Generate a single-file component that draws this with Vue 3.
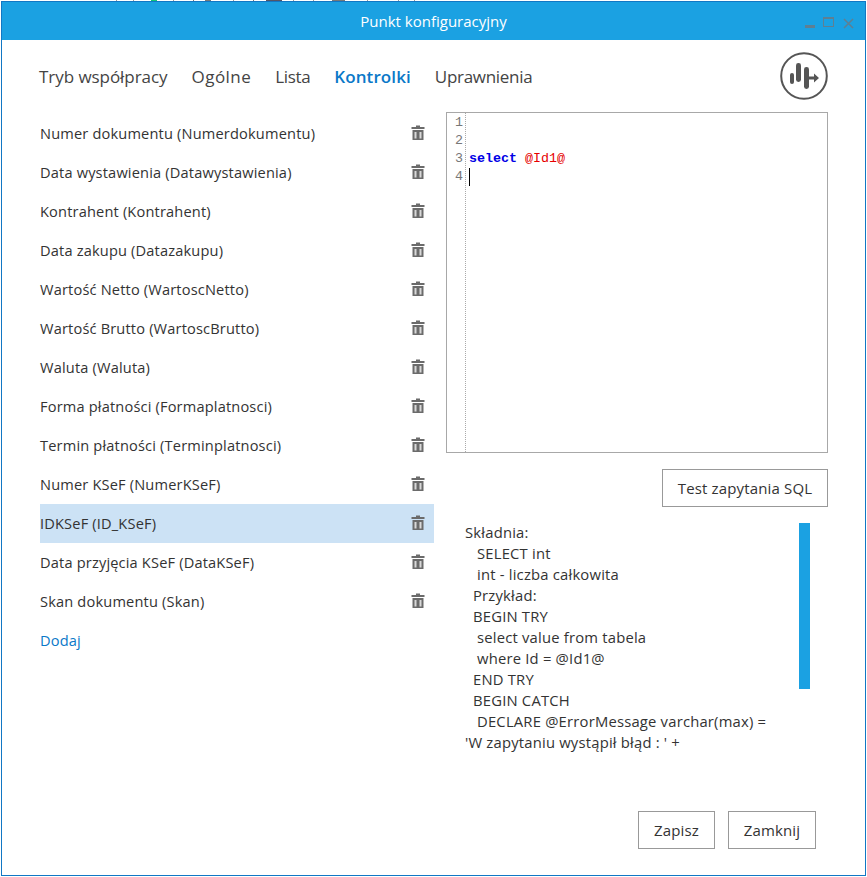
<script setup>
const tabs = [
  { label: 'Tryb współpracy', cls: 'tab-tryb' },
  { label: 'Ogólne', cls: 'tab-ogolne' },
  { label: 'Lista', cls: 'tab-lista' },
  { label: 'Kontrolki', cls: 'active' },
  { label: 'Uprawnienia', cls: 'tab-upr' },
]
const rows = [
  'Numer dokumentu (Numerdokumentu)',
  'Data wystawienia (Datawystawienia)',
  'Kontrahent (Kontrahent)',
  'Data zakupu (Datazakupu)',
  'Wartość Netto (WartoscNetto)',
  'Wartość Brutto (WartoscBrutto)',
  'Waluta (Waluta)',
  'Forma płatności (Formaplatnosci)',
  'Termin płatności (Terminplatnosci)',
  'Numer KSeF (NumerKSeF)',
  'IDKSeF (ID_KSeF)',
  'Data przyjęcia KSeF (DataKSeF)',
  'Skan dokumentu (Skan)',
]
const helpLines = [
  { t: 'Składnia:', i: 0 },
  { t: 'SELECT int', i: 12 },
  { t: 'int - liczba całkowita', i: 12 },
  { t: 'Przykład:', i: 8 },
  { t: 'BEGIN TRY', i: 8 },
  { t: 'select value from tabela', i: 12 },
  { t: 'where Id = @Id1@', i: 12 },
  { t: 'END TRY', i: 8 },
  { t: 'BEGIN CATCH', i: 8 },
  { t: 'DECLARE @ErrorMessage varchar(max) =', i: 12 },
  { t: "'W zapytaniu wystąpił błąd : ' +", i: 0 },
]
const marks = [
  { x: 116, w: 1, c: '#999' }, { x: 133, w: 1, c: '#999' }, { x: 151, w: 6, c: '#10c878' },
  { x: 173, w: 1, c: '#999' }, { x: 193, w: 1, c: '#777' }, { x: 205, w: 6, c: '#777' },
  { x: 233, w: 1, c: '#999' }, { x: 253, w: 1, c: '#777' }, { x: 266, w: 16, c: '#556' },
  { x: 293, w: 1, c: '#999' }, { x: 313, w: 1, c: '#999' }, { x: 332, w: 13, c: '#777' },
  { x: 367, w: 1, c: '#999' }, { x: 398, w: 1, c: '#999' }, { x: 414, w: 1, c: '#999' },
]
const strip = marks.map((m, i) => ({
  ...m,
  gap: m.x - (i ? marks[i - 1].x + marks[i - 1].w : 0),
}))
</script>

<template>
  <div class="page">
    <div class="strip">
      <span
        v-for="m in strip"
        :key="m.x"
        class="mark"
        :style="{ marginLeft: m.gap + 'px', width: m.w + 'px', background: m.c }"
      ></span>
    </div>
    <div class="window">
      <header class="titlebar">
        <span class="title">Punkt konfiguracyjny</span>
        <div class="controls">
          <svg width="52" height="16" viewBox="0 0 52 16">
            <rect x="2" y="10" width="10" height="3" fill="#5f7f92" />
            <rect x="20.500" y="2.500" width="10" height="9" fill="none" stroke="#5f7f92" />
            <rect x="20" y="2" width="11" height="2" fill="#5f7f92" />
            <path d="M41 4l9 9M50 4l-9 9" stroke="#5f7f92" stroke-width="1.500" fill="none" />
          </svg>
        </div>
      </header>

      <nav class="tabs">
        <span v-for="tab in tabs" :key="tab.label" class="tab" :class="tab.cls">{{ tab.label }}</span>
        <div class="logo">
          <svg width="48" height="48" viewBox="0 0 48 48">
            <circle cx="24" cy="24" r="22.800" fill="#fff" stroke="#555" stroke-width="2" />
            <rect x="10" y="21" width="4" height="11" rx="2" fill="#555" />
            <rect x="16" y="11" width="5" height="19" rx="2.400" fill="#555" />
            <rect x="24" y="15" width="5" height="22" rx="2.400" fill="#555" />
            <path d="M29 24.500h5V21.500l5 4.500-5 4.500V27.500h-5z" fill="#555" />
          </svg>
        </div>
      </nav>

      <main class="content">
        <section class="list">
          <div v-for="(row, i) in rows" :key="row" class="row" :class="{ selected: i === 10 }">
            <span class="row-label">{{ row }}</span>
            <svg class="trash" width="14" height="16" viewBox="0 0 14 16">
              <path d="M5 0.500h4v1.500h4.500v2H0.500V2H5z" fill="#6b6b6b" />
              <path d="M1.500 5h11v10h-11z" fill="#6b6b6b" />
              <rect x="3.500" y="7" width="2" height="6.500" fill="#d9d9d9" />
              <rect x="8.500" y="7" width="2" height="6.500" fill="#d9d9d9" />
            </svg>
          </div>
          <div class="row add"><span class="row-label">Dodaj</span></div>
        </section>

        <section class="side">
          <div class="editor">
            <div class="gutter">
              <div v-for="n in 4" :key="n">{{ n }}</div>
            </div>
            <div class="code">
              <div>&nbsp;</div>
              <div>&nbsp;</div>
              <div><span class="kw">select</span> <span class="var">@Id1@</span></div>
              <div><span class="caret"></span></div>
            </div>
          </div>
          <div class="test-wrap">
            <button class="btn test">Test zapytania SQL</button>
          </div>
          <div class="help">
            <div class="help-text">
              <div v-for="line in helpLines" :key="line.t" :style="{ paddingLeft: line.i + 'px' }">{{ line.t }}</div>
            </div>
            <div class="scroll"></div>
          </div>
        </section>
      </main>

      <footer class="footer">
        <button class="btn save">Zapisz</button>
        <button class="btn close">Zamknij</button>
      </footer>
    </div>
  </div>
</template>

<style>
html, body { margin: 0; background: #fff; }
</style>

<style scoped>
.page { width: 867px; height: 877px; overflow: hidden; }
.strip { display: flex; height: 1px; }
.mark { display: block; height: 1px; flex: none; }
.window {
  box-sizing: border-box;
  width: 865px;
  height: 875px;
  margin-left: 1px;
  border: 1px solid #1277c4;
  background: #fff;
  font-family: "Open Sans", "Noto Sans", sans-serif;
  color: #333;
  display: flex;
  flex-direction: column;
}
.titlebar {
  height: 38px;
  background: #1ba1e2;
  display: flex;
  align-items: center;
  justify-content: center;
  position: relative;
  flex: none;
}
.title { color: #fff; font-size: 15px; }
.controls { position: absolute; right: 10px; top: 12px; height: 16px; }
.tabs {
  display: flex;
  align-items: center;
  gap: 24px;
  height: 72px;
  padding: 0 37px 0 37px;
  flex: none;
}
.tab { font-size: 17px; color: #444; letter-spacing: -0.050px; }
.tab-ogolne { letter-spacing: 0.450px; }
.tab-lista { letter-spacing: -0.350px; }
.tab.active { color: #0a78c8; font-weight: 600; letter-spacing: 0.100px; }
.tab-upr { letter-spacing: -0.300px; }
.logo { margin-left: auto; height: 48px; }
.content {
  display: flex;
  gap: 12px;
  padding: 0 37px 0 38px;
  flex: 1;
}
.list { width: 394px; flex: none; padding-top: 2px; }
.row {
  display: flex;
  align-items: center;
  justify-content: space-between;
  height: 39px;
  font-size: 14.600px;
  letter-spacing: 0.170px;
  color: #333;
}
.row-label { margin-bottom: 2px; }
.row.selected { background: #cce2f5; }
.row.add { color: #0a78c8; }
.trash { margin-right: 9px; margin-bottom: 2px; }
.side { flex: 1; min-width: 0; }
.editor {
  box-sizing: border-box;
  height: 341px;
  border: 1px solid #a8a8a8;
  display: flex;
  font-family: "Liberation Mono", monospace;
  font-size: 13.333px;
  line-height: 18px;
}
.gutter {
  width: 19px;
  padding-top: 1px;
  border-right: 1px dotted #aaa;
  color: #777;
  text-align: right;
  padding-right: 2px;
  box-sizing: border-box;
  flex: none;
}
.code { padding: 1px 0 0 3px; }
.kw { color: #0000e6; font-weight: 700; }
.var { color: #e60000; }
.caret { display: inline-block; width: 1px; height: 18px; background: #000; vertical-align: top; }
.test-wrap { display: flex; justify-content: flex-end; margin-top: 16px; }
.btn {
  box-sizing: border-box;
  height: 38px;
  background: #fff;
  border: 1px solid #999;
  font-family: inherit;
  font-size: 15px;
  letter-spacing: 0.150px;
  color: #333;
  padding: 0;
}
.test { width: 166px; }
.help { display: flex; margin-top: 16px; padding-left: 19px; }
.help-text { width: 334px; font-size: 14.800px; letter-spacing: 0.200px; line-height: 21px; flex: none; margin-top: -1px; }
.scroll { width: 11px; height: 166px; background: #1ba1e2; }
.footer {
  display: flex;
  justify-content: flex-end;
  gap: 13px;
  padding: 0 49px 26px 0;
  flex: none;
}
.save { width: 77px; }
.close { width: 88px; }
</style>
